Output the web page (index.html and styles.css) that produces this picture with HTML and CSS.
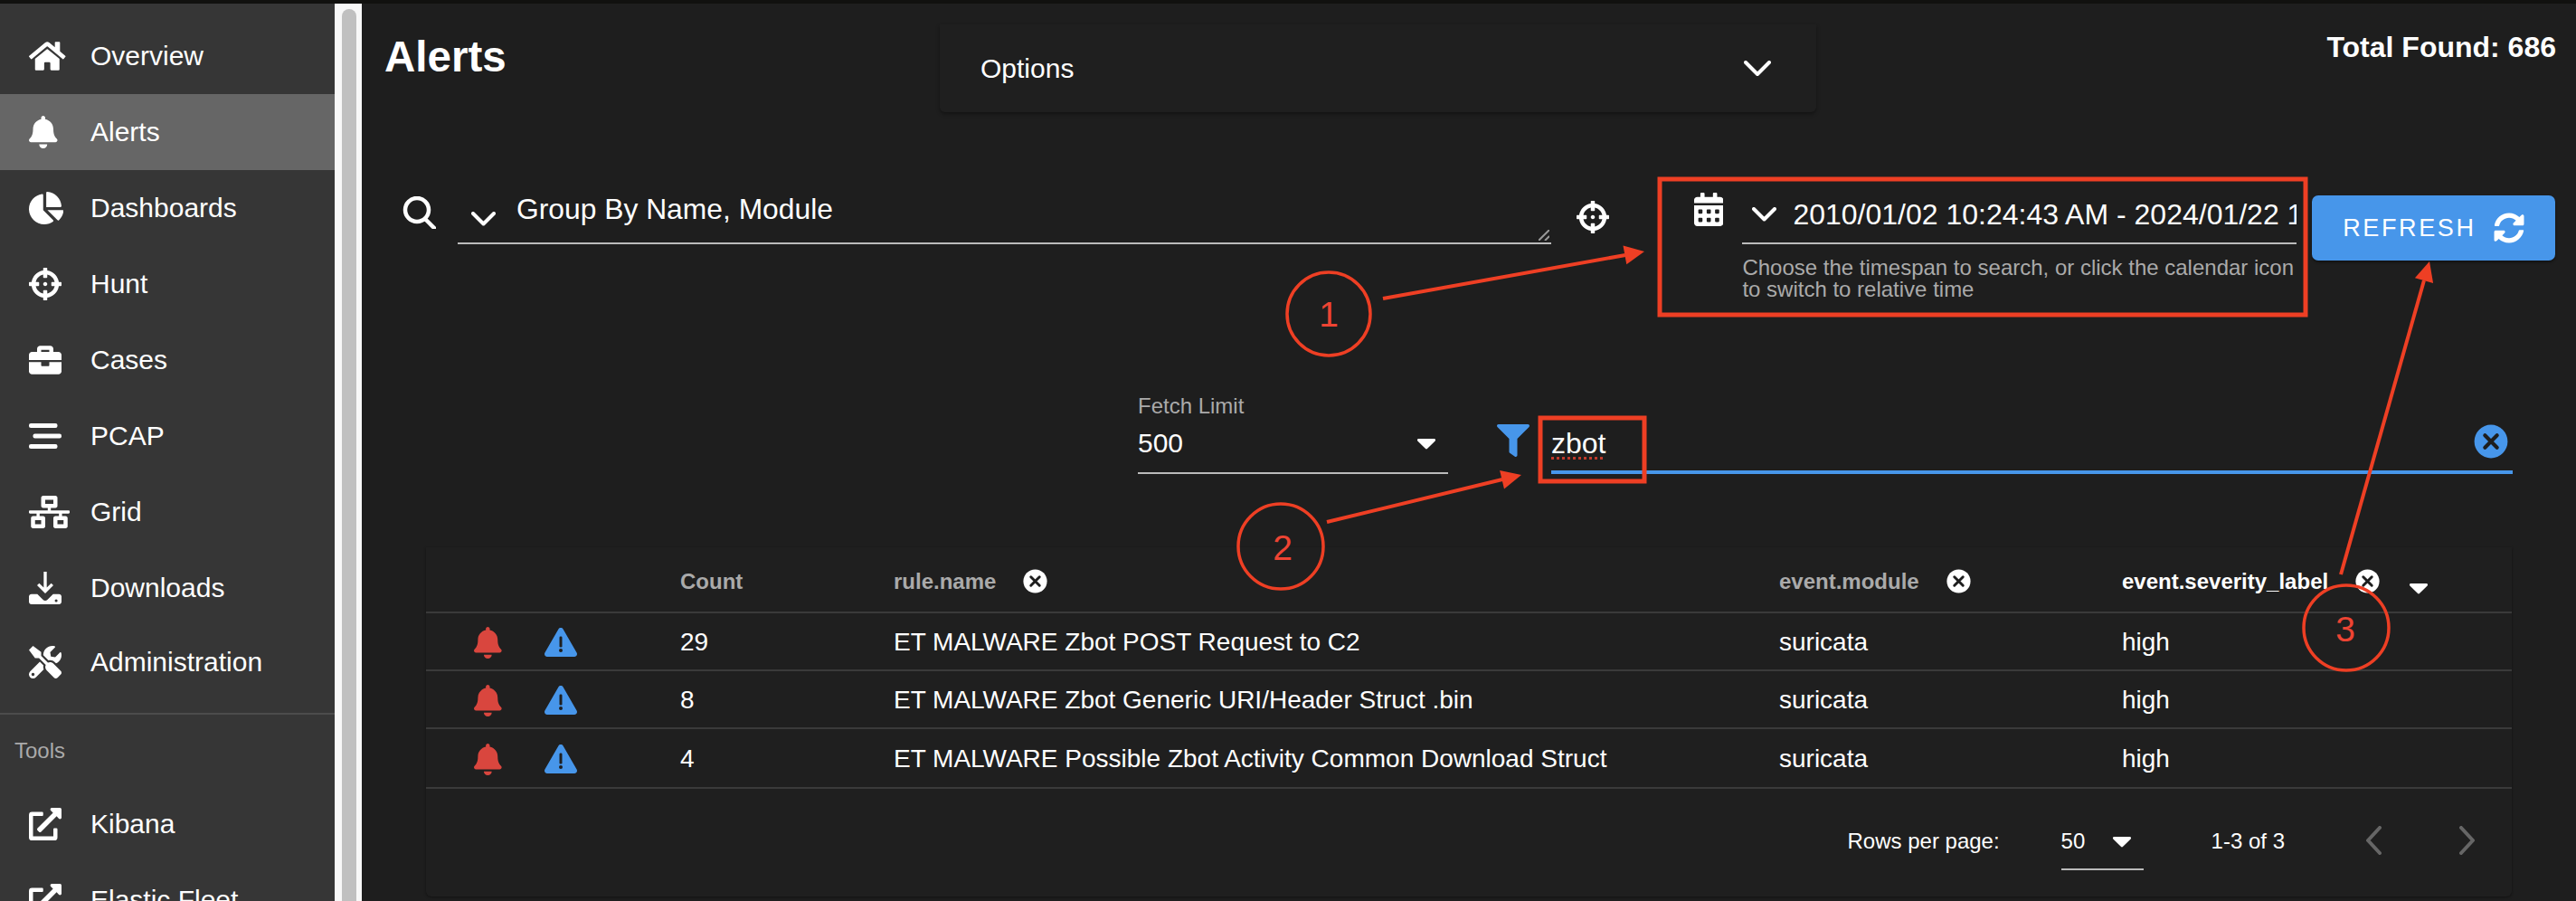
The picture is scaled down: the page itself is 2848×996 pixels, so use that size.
FILE: index.html
```html
<!DOCTYPE html>
<html>

<head>
    <meta charset="utf-8">
    <title>Alerts</title>
    <link rel="stylesheet" href="styles.css">
</head>

<body>
    <!-- icon shapes -->
    <svg class="sprite" xmlns="http://www.w3.org/2000/svg">
        <defs>
            <path id="i-home" d="M280.37 148.26L96 300.11V464a16 16 0 0 0 16 16l112.06-.29a16 16 0 0 0 15.92-16V368a16 16 0 0 1 16-16h64a16 16 0 0 1 16 16v95.64a16 16 0 0 0 16 16.05L464 480a16 16 0 0 0 16-16V300L295.67 148.26a12.19 12.19 0 0 0-15.3 0zM571.6 251.47L488 182.56V44.05a12 12 0 0 0-12-12h-56a12 12 0 0 0-12 12v72.61L318.47 43a48 48 0 0 0-61 0L4.34 251.47a12 12 0 0 0-1.6 16.9l25.5 31A12 12 0 0 0 45.15 301l235.22-193.74a12.19 12.19 0 0 1 15.3 0L530.9 301a12 12 0 0 0 16.9-1.6l25.5-31a12 12 0 0 0-1.7-16.93z"/>
            <path id="i-bell" d="M224 512c35.32 0 63.97-28.65 63.97-64H160.03c0 35.35 28.65 64 63.97 64zm215.39-149.71c-19.32-20.76-55.47-51.99-55.47-154.29 0-77.7-54.48-139.9-127.94-155.16V32c0-17.67-14.32-32-31.98-32s-31.98 14.33-31.98 32v20.84C118.56 68.1 64.08 130.3 64.08 208c0 102.3-36.15 133.53-55.47 154.29-6 6.45-8.66 14.16-8.61 21.71.11 16.4 12.98 32 32.1 32h383.8c19.12 0 32-15.6 32.1-32 .05-7.55-2.61-15.27-8.61-21.71z"/>
            <path id="i-pie" d="M527.79 288H290.5l158.03 158.03c6.04 6.04 15.98 6.53 22.19.68 38.7-36.46 65.32-85.61 73.13-140.86 1.34-9.46-6.51-17.85-16.06-17.85zm-15.83-64.8C503.72 103.74 408.26 8.28 288.8.04 279.68-.59 272 7.1 272 16.24V240h223.77c9.14 0 16.82-7.68 16.19-16.8zM224 288V50.71c0-9.55-8.39-17.4-17.84-16.06C86.99 51.49-4.1 155.6.14 280.37 4.5 408.51 114.83 513.59 243.03 511.98c50.4-.63 96.97-16.87 135.26-44.03 7.9-5.6 8.42-17.23 1.57-24.08L224 288z"/>
            <path id="i-crosshairs" d="M500 224h-30.364C455.724 130.325 381.675 56.276 288 42.364V12c0-6.627-5.373-12-12-12h-40c-6.627 0-12 5.373-12 12v30.364C130.325 56.276 56.276 130.325 42.364 224H12c-6.627 0-12 5.373-12 12v40c0 6.627 5.373 12 12 12h30.364C56.276 381.675 130.325 455.724 224 469.636V500c0 6.627 5.373 12 12 12h40c6.627 0 12-5.373 12-12v-30.364C381.675 455.724 455.724 381.675 469.636 288H500c6.627 0 12-5.373 12-12v-40c0-6.627-5.373-12-12-12zM288 404.634V364c0-6.627-5.373-12-12-12h-40c-6.627 0-12 5.373-12 12v40.634C165.826 392.232 119.783 346.243 107.366 288H148c6.627 0 12-5.373 12-12v-40c0-6.627-5.373-12-12-12h-40.634C119.768 165.826 165.757 119.783 224 107.366V148c0 6.627 5.373 12 12 12h40c6.627 0 12-5.373 12-12v-40.634C346.174 119.768 392.217 165.757 404.634 224H364c-6.627 0-12 5.373-12 12v40c0 6.627 5.373 12 12 12h40.634C392.232 346.174 346.243 392.217 288 404.634zM288 256c0 17.673-14.327 32-32 32s-32-14.327-32-32c0-17.673 14.327-32 32-32s32 14.327 32 32z"/>
            <path id="i-briefcase" d="M320 336c0 8.84-7.16 16-16 16h-96c-8.84 0-16-7.16-16-16v-48H0v144c0 25.6 22.4 48 48 48h416c25.6 0 48-22.4 48-48V288H320v48zm144-208h-80V80c0-25.6-22.4-48-48-48H176c-25.6 0-48 22.4-48 48v48H48c-25.6 0-48 22.4-48 48v80h512v-80c0-25.6-22.4-48-48-48zm-144 0H192V96h128v32z"/>
            <g id="i-stream">
                <rect x="0" y="56" width="448" height="72" rx="30"/>
                <rect x="64" y="220" width="448" height="72" rx="30"/>
                <rect x="0" y="384" width="448" height="72" rx="30"/>
            </g>
            <path id="i-network" d="M640 264v-16c0-8.84-7.16-16-16-16H344v-40h72c17.67 0 32-14.33 32-32V32c0-17.67-14.33-32-32-32H224c-17.67 0-32 14.33-32 32v128c0 17.67 14.33 32 32 32h72v40H16c-8.84 0-16 7.16-16 16v16c0 8.84 7.16 16 16 16h104v40H64c-17.67 0-32 14.33-32 32v128c0 17.67 14.33 32 32 32h160c17.67 0 32-14.33 32-32V352c0-17.67-14.33-32-32-32h-56v-40h304v40h-56c-17.67 0-32 14.33-32 32v128c0 17.67 14.33 32 32 32h160c17.67 0 32-14.33 32-32V352c0-17.67-14.33-32-32-32h-56v-40h104c8.84 0 16-7.16 16-16zM256 128V64h128v64H256zm-64 320H96v-64h96v64zm352 0h-96v-64h96v64z"/>
            <path id="i-download" fill-rule="evenodd" d="M232 0h48v250l70-70 34 34-128 128-128-128 34-34 70 70zM40 352h92l90 90c19 19 49 19 68 0l90-90h92c22 0 40 18 40 40v80c0 22-18 40-40 40H40c-22 0-40-18-40-40v-80c0-22 18-40 40-40zm388 80a22 22 0 1 0 0 44 22 22 0 1 0 0-44z"/>
            <path id="i-tools" d="M501.1 395.7L384 278.6c-23.1-23.1-57.6-27.6-85.4-13.9L192 158.1V96L64 0 0 64l96 128h62.1l106.6 106.6c-13.6 27.8-9.2 62.3 13.9 85.4l117.1 117.1c14.6 14.6 38.2 14.6 52.7 0l52.7-52.7c14.5-14.6 14.5-38.2 0-52.7zM331.7 225c28.3 0 54.9 11 74.9 31l19.4 19.4c15.8-6.9 30.8-16.5 43.8-29.5 37.1-37.1 49.7-89.3 37.9-136.7-2.2-9-13.5-12.1-20.1-5.5l-74.4 74.4-67.9-11.3L334 98.9l74.4-74.4c6.6-6.6 3.4-17.9-5.7-20.2-47.4-11.7-99.6.9-136.6 37.9-28.5 28.5-41.9 66.1-41.2 103.6l82.1 82.1c8.1-1.9 16.5-2.9 24.7-2.9zm-103.9 82l-56.7-56.7L18.7 402.8c-25 25-25 65.5 0 90.5s65.5 25 90.5 0l123.6-123.6c-7.6-19.9-9.9-41.6-5-62.7zM64 472c-13.2 0-24-10.8-24-24 0-13.3 10.7-24 24-24s24 10.7 24 24c0 13.2-10.7 24-24 24z"/>
            <path id="i-external" d="M432 320h-32a16 16 0 0 0-16 16v112H64V128h144a16 16 0 0 0 16-16V80a16 16 0 0 0-16-16H48a48 48 0 0 0-48 48v352a48 48 0 0 0 48 48h352a48 48 0 0 0 48-48V336a16 16 0 0 0-16-16zM488 0H360c-21.37 0-32.05 25.91-17 41l35.73 35.73L135 320.37a24 24 0 0 0 0 34L157.67 377a24 24 0 0 0 34 0l243.61-243.68L471 169c15 15 41 4.5 41-17V24a24 24 0 0 0-24-24z"/>
            <path id="i-calendar" d="M0 464c0 26.5 21.5 48 48 48h352c26.5 0 48-21.5 48-48V192H0v272zm320-196c0-6.6 5.4-12 12-12h40c6.6 0 12 5.4 12 12v40c0 6.6-5.4 12-12 12h-40c-6.6 0-12-5.4-12-12v-40zm0 128c0-6.6 5.4-12 12-12h40c6.6 0 12 5.4 12 12v40c0 6.6-5.4 12-12 12h-40c-6.6 0-12-5.4-12-12v-40zM192 268c0-6.6 5.4-12 12-12h40c6.6 0 12 5.4 12 12v40c0 6.6-5.4 12-12 12h-40c-6.6 0-12-5.4-12-12v-40zm0 128c0-6.6 5.4-12 12-12h40c6.6 0 12 5.4 12 12v40c0 6.6-5.4 12-12 12h-40c-6.6 0-12-5.4-12-12v-40zM64 268c0-6.6 5.4-12 12-12h40c6.6 0 12 5.4 12 12v40c0 6.6-5.4 12-12 12H76c-6.6 0-12-5.4-12-12v-40zm0 128c0-6.6 5.4-12 12-12h40c6.6 0 12 5.4 12 12v40c0 6.6-5.4 12-12 12H76c-6.6 0-12-5.4-12-12v-40zM400 64h-48V16c0-8.8-7.2-16-16-16h-32c-8.8 0-16 7.2-16 16v48H160V16c0-8.8-7.2-16-16-16h-32c-8.8 0-16 7.2-16 16v48H48C21.5 64 0 85.5 0 112v48h448v-48c0-26.5-21.5-48-48-48z"/>
            <path id="i-sync" d="M370.72 133.28C339.458 104.008 298.888 87.962 255.848 88c-77.458.068-144.328 53.178-162.791 126.85-1.344 5.363-6.122 9.15-11.651 9.15H24.103c-7.498 0-13.194-6.807-11.807-14.176C33.933 94.924 134.813 8 256 8c66.448 0 126.791 26.136 171.315 68.685L463.03 40.97C478.149 25.851 504 36.559 504 57.941V192c0 13.255-10.745 24-24 24H345.941c-21.382 0-32.09-25.851-16.971-40.971l41.75-41.749zM32 296h134.059c21.382 0 32.09 25.851 16.971 40.971l-41.75 41.75c31.262 29.273 71.835 45.319 114.876 45.28 77.418-.07 144.315-53.144 162.787-126.849 1.344-5.363 6.122-9.15 11.651-9.15h57.304c7.498 0 13.194 6.807 11.807 14.176C478.067 417.076 377.187 504 256 504c-66.448 0-126.791-26.136-171.315-68.685L48.97 471.03C33.851 486.149 8 475.441 8 454.059V320c0-13.255 10.745-24 24-24z"/>
            <path id="i-filter" d="M487.976 0H24.028C2.71 0-8.047 25.866 7.058 40.971L192 225.941V432c0 7.831 3.821 15.17 10.237 19.662l80 55.98C298.02 518.69 320 507.493 320 487.98V225.941l184.947-184.97C520.021 25.896 509.338 0 487.976 0z"/>
            <g id="i-warning">
                <path d="M569.517 440.013C587.975 472.007 564.806 512 527.94 512H48.054c-36.937 0-59.999-40.055-41.577-71.987L246.423 23.985c18.467-32.009 64.72-31.951 83.154 0l239.94 416.028z"/>
                <rect class="iconCut" x="264" y="150" width="48" height="195" rx="22"/>
                <circle class="iconCut" cx="288" cy="400" r="32"/>
            </g>
            <g id="i-clear">
                <circle cx="256" cy="256" r="248"/>
                <path class="iconCutLine" d="M166 166L346 346M346 166L166 346"/>
            </g>
            <path id="i-caret" d="M31.3 192h257.3c17.8 0 26.7 21.5 14.1 34.1L174.1 354.8c-7.8 7.8-20.5 7.8-28.3 0L17.2 226.1C4.6 213.5 13.5 192 31.3 192z"/>
        </defs>
    </svg>

    <div class="topStrip"></div>

    <div class="app">
        <aside class="sidebar">
            <nav class="navList">
                <div class="navItem"><span class="navIcon"><svg class="icon" viewBox="0 0 576 512"><use href="#i-home"/></svg></span>Overview</div>
                <div class="navItem active"><span class="navIcon"><svg class="icon" viewBox="0 0 448 512"><use href="#i-bell"/></svg></span>Alerts</div>
                <div class="navItem"><span class="navIcon"><svg class="icon" viewBox="0 0 544 512"><use href="#i-pie"/></svg></span>Dashboards</div>
                <div class="navItem"><span class="navIcon"><svg class="icon" viewBox="0 0 512 512"><use href="#i-crosshairs"/></svg></span>Hunt</div>
                <div class="navItem"><span class="navIcon"><svg class="icon" viewBox="0 0 512 512"><use href="#i-briefcase"/></svg></span>Cases</div>
                <div class="navItem"><span class="navIcon"><svg class="icon" viewBox="0 0 512 512"><use href="#i-stream"/></svg></span>PCAP</div>
                <div class="navItem"><span class="navIcon"><svg class="icon" viewBox="0 0 640 512"><use href="#i-network"/></svg></span>Grid</div>
                <div class="navItem"><span class="navIcon"><svg class="icon" viewBox="0 0 512 512"><use href="#i-download"/></svg></span>Downloads</div>
                <div class="navItem short"><span class="navIcon"><svg class="icon" viewBox="0 0 512 512"><use href="#i-tools"/></svg></span>Administration</div>
            </nav>
            <div class="navDivider"></div>
            <div class="navHeading">Tools</div>
            <nav class="navList">
                <div class="navItem"><span class="navIcon"><svg class="icon" viewBox="0 0 512 512"><use href="#i-external"/></svg></span>Kibana</div>
                <div class="navItem"><span class="navIcon"><svg class="icon" viewBox="0 0 512 512"><use href="#i-external"/></svg></span>Elastic Fleet</div>
            </nav>
        </aside>

        <div class="scrollTrack"><div class="scrollThumb"></div></div>

        <main class="content">
            <div class="headerRow">
                <h1 class="pageTitle">Alerts</h1>
                <div class="optionsPanel">
                    <span>Options</span>
                    <svg class="chevron large" viewBox="0 0 30 18"><polyline points="2,2 15,15 28,2"/></svg>
                </div>
                <div class="totalFound">Total Found: 686</div>
            </div>

            <div class="queryRow">
                <svg class="searchIcon" viewBox="0 0 37 36"><circle cx="16" cy="15" r="13"/><line x1="25" y1="25" x2="35" y2="35"/></svg>
                <div class="queryInput">
                    <svg class="chevron" viewBox="0 0 27 16"><polyline points="2,2 13.5,13.5 25,2"/></svg>
                    <span class="queryText">Group By Name, Module</span>
                    <svg class="resizeGrip" viewBox="0 0 12 12"><line x1="0" y1="12" x2="12" y2="0"/><line x1="7" y1="12" x2="12" y2="7"/></svg>
                </div>
                <svg class="icon huntIcon" viewBox="0 0 512 512"><use href="#i-crosshairs"/></svg>
                <svg class="icon calendarIcon" viewBox="0 0 448 512"><use href="#i-calendar"/></svg>
                <div class="dateBlock">
                    <div class="dateInput">
                        <svg class="chevron" viewBox="0 0 27 16"><polyline points="2,2 13.5,13.5 25,2"/></svg>
                        <span class="dateText">2010/01/02 10:24:43 AM - 2024/01/22 10:24:43 AM</span>
                    </div>
                    <div class="helperText">Choose the timespan to search, or click the calendar icon to switch to relative time</div>
                </div>
                <button class="refreshBtn">REFRESH <svg class="icon syncIcon" viewBox="0 0 512 512"><use href="#i-sync"/></svg></button>
            </div>

            <div class="filterRow">
                <div class="fetchLimit">
                    <div class="fieldLabel">Fetch Limit</div>
                    <div class="fetchValue"><span>500</span><svg class="caret" viewBox="0 176 320 192"><use href="#i-caret"/></svg></div>
                </div>
                <svg class="icon filterIcon" viewBox="0 0 512 512"><use href="#i-filter"/></svg>
                <div class="filterInput">
                    <span class="filterText">zbot</span>
                    <svg class="icon clearIcon" viewBox="0 0 512 512"><use href="#i-clear"/></svg>
                </div>
            </div>

            <section class="tablePanel">
                <div class="tableRow headRow">
                    <div></div>
                    <div></div>
                    <div class="colHead">Count</div>
                    <div class="colHead">rule.name<svg class="icon chipIcon" viewBox="0 0 512 512"><use href="#i-clear"/></svg></div>
                    <div class="colHead">event.module<svg class="icon chipIcon" viewBox="0 0 512 512"><use href="#i-clear"/></svg></div>
                    <div class="colHead sorted">event.severity_label<svg class="icon chipIcon" viewBox="0 0 512 512"><use href="#i-clear"/></svg><svg class="caret sortCaret" viewBox="0 176 320 192"><use href="#i-caret"/></svg></div>
                </div>
                <div class="tableRow">
                    <svg class="icon bellIcon" viewBox="0 0 448 512"><use href="#i-bell"/></svg>
                    <svg class="icon warnIcon" viewBox="0 0 576 512"><use href="#i-warning"/></svg>
                    <div>29</div>
                    <div>ET MALWARE Zbot POST Request to C2</div>
                    <div>suricata</div>
                    <div>high</div>
                </div>
                <div class="tableRow">
                    <svg class="icon bellIcon" viewBox="0 0 448 512"><use href="#i-bell"/></svg>
                    <svg class="icon warnIcon" viewBox="0 0 576 512"><use href="#i-warning"/></svg>
                    <div>8</div>
                    <div>ET MALWARE Zbot Generic URI/Header Struct .bin</div>
                    <div>suricata</div>
                    <div>high</div>
                </div>
                <div class="tableRow lastRow">
                    <svg class="icon bellIcon" viewBox="0 0 448 512"><use href="#i-bell"/></svg>
                    <svg class="icon warnIcon" viewBox="0 0 576 512"><use href="#i-warning"/></svg>
                    <div>4</div>
                    <div>ET MALWARE Possible Zbot Activity Common Download Struct</div>
                    <div>suricata</div>
                    <div>high</div>
                </div>
                <div class="tableFooter">
                    <span>Rows per page:</span>
                    <div class="pageSize"><span>50</span><svg class="caret" viewBox="0 176 320 192"><use href="#i-caret"/></svg></div>
                    <span class="pageCount">1-3 of 3</span>
                    <svg class="pageArrow prev" viewBox="0 0 18 32"><polyline points="16,2 3,16 16,30"/></svg>
                    <svg class="pageArrow next" viewBox="0 0 18 32"><polyline points="2,2 15,16 2,30"/></svg>
                </div>
            </section>
        </main>
    </div>

    <!-- red notes drawn on top of the screenshot -->
    <svg class="notes" viewBox="0 0 2848 996">
        <rect class="noteLine" x="1835" y="198" width="714" height="150"/>
        <rect class="noteLine" x="1703" y="462" width="115" height="70"/>

        <line class="noteLine thin" x1="1529" y1="330" x2="1797" y2="282"/>
        <polygon class="noteHead" points="1818,278 1798.3,292.2 1794.5,271.6"/>
        <line class="noteLine thin" x1="1467" y1="577" x2="1661" y2="530"/>
        <polygon class="noteHead" points="1682,525 1663,540.4 1658.1,520"/>
        <line class="noteLine thin" x1="2588" y1="635" x2="2680" y2="310"/>
        <polygon class="noteHead" points="2686,289 2690.1,313.1 2669.9,307.3"/>

        <circle class="noteLine ring" cx="1469" cy="347" r="46"/>
        <circle class="noteLine ring" cx="1416" cy="604" r="47"/>
        <circle class="noteLine ring" cx="2594" cy="694" r="47"/>
        <text class="noteText" x="1469" y="361">1</text>
        <text class="noteText" x="1418" y="619">2</text>
        <text class="noteText" x="2593" y="709">3</text>
    </svg>
</body>

</html>
```
FILE: styles.css
```css
/* page */
* {
    box-sizing: border-box;
}

html,
body {
    margin: 0;
    height: 100%;
}

body {
    position: relative;
    overflow: hidden;
    display: flex;
    flex-direction: column;
    background-color: #1c1c1c;
    color: #fff;
    font-family: "Liberation Sans", Arial, sans-serif;
    font-size: 30px;
}

.sprite {
    position: absolute;
    width: 0;
    height: 0;
}

.topStrip {
    flex: none;
    height: 4px;
    background-color: #11110f;
}

.app {
    flex: 1;
    display: flex;
    min-height: 0;
}

.icon {
    display: block;
    flex: none;
    height: 36px;
    width: auto;
    fill: #fff;
}

.iconCut {
    fill: #1e1e1e;
}

.iconCutLine {
    fill: none;
    stroke: #1e1e1e;
    stroke-width: 56;
    stroke-linecap: round;
}

/* sidebar */
.sidebar {
    flex: none;
    width: 370px;
    padding-top: 16px;
    background-color: #363636;
    overflow: hidden;
}

.navItem {
    display: flex;
    align-items: center;
    height: 84px;
    padding-left: 32px;
}

.navItem.active {
    background-color: #666;
}

.navItem.short {
    height: 80px;
}

.navIcon {
    flex: none;
    width: 68px;
}

.navDivider {
    height: 2px;
    margin-top: 16px;
    background-color: #4c4c4c;
}

.navHeading {
    display: flex;
    align-items: center;
    height: 79px;
    padding-left: 16px;
    color: #aaa;
    font-size: 24px;
}

.scrollTrack {
    flex: none;
    width: 30px;
    padding: 6px 6px 0 8px;
    background-color: #f8f8f8;
}

.scrollThumb {
    height: 100%;
    border-radius: 8px 8px 0 0;
    background-color: #c0c0c0;
}

/* main area */
.content {
    flex: 1;
    min-width: 0;
    background-color: #1e1e1e;
}

.headerRow {
    display: flex;
    align-items: flex-start;
    padding: 23px 22px 0 25px;
}

.pageTitle {
    width: 614px;
    margin: 4px 0 0;
    font-size: 47.5px;
    line-height: 64px;
    font-weight: bold;
}

.optionsPanel {
    display: flex;
    align-items: center;
    justify-content: space-between;
    width: 969px;
    height: 97px;
    padding: 0 50px 0 45px;
    background-color: #1f1f1f;
    border-radius: 0 0 6px 6px;
    box-shadow: 0 2px 4px rgba(0, 0, 0, 0.4);
}

.totalFound {
    margin-left: auto;
    margin-top: 1px;
    font-size: 32px;
    line-height: 48px;
    font-weight: bold;
}

.chevron {
    flex: none;
    width: 27px;
    height: 16px;
    fill: none;
    stroke: #fff;
    stroke-width: 4;
    stroke-linecap: round;
    stroke-linejoin: round;
}

.chevron.large {
    width: 30px;
    height: 18px;
}

/* query row */
.queryRow {
    display: flex;
    align-items: flex-start;
    margin-top: 90px;
    padding-left: 45px;
}

.searchIcon {
    flex: none;
    width: 37px;
    height: 36px;
    margin-top: 3px;
    fill: none;
    stroke: #fff;
    stroke-width: 4.5;
    stroke-linecap: round;
}

.queryInput {
    position: relative;
    display: flex;
    flex: none;
    align-items: center;
    width: 1209px;
    height: 56px;
    margin-left: 24px;
    padding: 0 0 8px 15px;
    border-bottom: 2px solid #bbb;
}

.queryInput .chevron {
    margin-top: 10px;
}

.queryText {
    margin-left: 23px;
    margin-top: -12px;
    font-size: 31.8px;
}

.resizeGrip {
    position: absolute;
    right: 2px;
    bottom: 2px;
    width: 12px;
    height: 12px;
    stroke: #999;
    stroke-width: 2;
}

.huntIcon {
    margin-left: 28px;
    margin-top: 8px;
}

.calendarIcon {
    margin-left: 94px;
    margin-top: -1px;
    height: 37px;
}

.dateBlock {
    flex: none;
    width: 613px;
    margin-left: 21px;
}

.dateInput {
    display: flex;
    align-items: center;
    height: 56px;
    padding: 0 0 8px 11px;
    border-bottom: 2px solid #bbb;
    overflow: hidden;
    white-space: nowrap;
    font-size: 32px;
}

.dateText {
    margin-left: 18px;
}

.helperText {
    margin-top: 14px;
    color: #aaa;
    font-size: 24px;
    line-height: 24px;
}

.refreshBtn {
    display: flex;
    flex: none;
    align-items: center;
    justify-content: center;
    gap: 20px;
    width: 269px;
    height: 72px;
    margin-left: 17px;
    margin-top: 2px;
    border: none;
    border-radius: 7px;
    background-color: #4796ea;
    color: #fff;
    font-family: inherit;
    font-size: 27px;
    letter-spacing: 2.6px;
    box-shadow: 0 2px 3px rgba(0, 0, 0, 0.4);
}

.syncIcon {
    height: 34px;
}

/* fetch limit and filter */
.filterRow {
    display: flex;
    align-items: flex-end;
    margin-top: 104px;
    padding-left: 858px;
}

.fetchLimit {
    flex: none;
    width: 343px;
    border-bottom: 2px solid #bbb;
    padding-bottom: 14px;
}

.fieldLabel {
    margin-bottom: 10px;
    color: #aaa;
    font-size: 24px;
    line-height: 26px;
}

.fetchValue {
    display: flex;
    align-items: center;
    justify-content: space-between;
    padding-right: 13px;
    line-height: 36px;
}

.caret {
    flex: none;
    width: 22px;
    height: 13px;
    fill: #fff;
}

.filterIcon {
    height: 36px;
    margin-left: 54px;
    margin-bottom: 19px;
    fill: #4796ea;
}

.filterInput {
    display: flex;
    flex: none;
    align-items: center;
    justify-content: space-between;
    width: 1063px;
    height: 62px;
    margin-left: 24px;
    padding: 0 5px 6px 0;
    border-bottom: 4px solid #4796ea;
}

.filterText {
    margin-top: 4px;
    font-size: 32px;
    line-height: 36px;
    text-decoration: underline dotted #c0392b 3px;
    text-underline-offset: 4px;
}

.clearIcon {
    height: 38px;
    fill: #4796ea;
}

/* table */
.tablePanel {
    width: 2306px;
    height: 386px;
    margin: 81px 0 0 71px;
    background-color: #1f1f1f;
    border-radius: 0 0 6px 6px;
    box-shadow: 0 1px 3px rgba(0, 0, 0, 0.4);
    font-size: 28px;
}

.tableRow {
    display: grid;
    grid-template-columns: 78px 150px 236px 979px 379px 1fr;
    align-items: center;
    height: 64px;
    padding: 2px 0 0 53px;
    border-bottom: 2px solid #3a3a3a;
}

.headRow {
    height: 73px;
    padding: 4px 0 0 53px;
}

.lastRow {
    height: 66px;
}

.colHead {
    display: flex;
    align-items: center;
    color: #aaa;
    font-size: 24px;
    font-weight: bold;
}

.colHead.sorted {
    color: #fff;
}

.chipIcon {
    height: 27px;
    margin-left: 30px;
}

.sortCaret {
    margin-left: 32px;
    margin-top: 16px;
}

.bellIcon {
    height: 35px;
    fill: #d9463e;
}

.warnIcon {
    height: 32px;
    fill: #4796ea;
}

.tableFooter {
    display: flex;
    align-items: flex-start;
    justify-content: flex-end;
    padding: 40px 40px 0 0;
    font-size: 24px;
    line-height: 36px;
}

.pageSize {
    display: flex;
    align-items: flex-start;
    justify-content: space-between;
    width: 91px;
    height: 50px;
    margin-left: 68px;
    padding: 0 13px 0 0;
    border-bottom: 2px solid #bbb;
}

.pageSize .caret {
    margin-top: 12px;
}

.pageCount {
    margin-left: 75px;
}

.pageArrow {
    flex: none;
    width: 18px;
    height: 32px;
    margin-top: 1px;
    fill: none;
    stroke: #666;
    stroke-width: 4;
    stroke-linecap: round;
    stroke-linejoin: round;
}

.pageArrow.prev {
    margin-left: 89px;
}

.pageArrow.next {
    margin-left: 86px;
}

/* notes layer */
.notes {
    position: absolute;
    left: 0;
    top: 0;
    width: 2848px;
    height: 996px;
    pointer-events: none;
}

.noteLine {
    fill: none;
    stroke: #ee3f24;
    stroke-width: 5;
}

.noteLine.thin {
    stroke-width: 4;
}

.noteLine.ring {
    stroke-width: 3.5;
}

.noteHead {
    fill: #ee3f24;
}

.noteText {
    fill: #ee4433;
    font-size: 39px;
    text-anchor: middle;
}
```
